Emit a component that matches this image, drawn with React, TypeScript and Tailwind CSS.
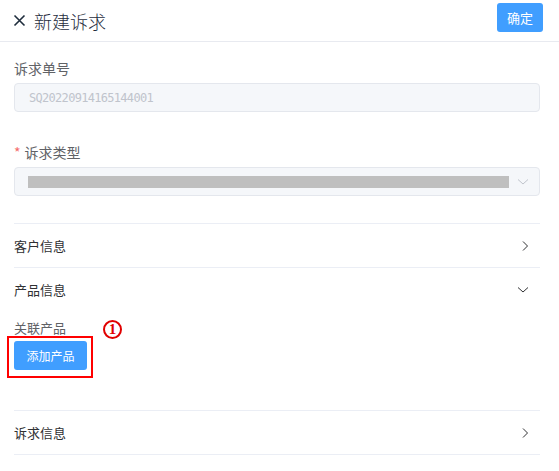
import React from "react";

const ChevronRight = () => (
  <svg width="8" height="12" viewBox="0 0 8 12" fill="none">
    <path d="M2 1.5L6.5 6L2 10.5" stroke="#303133" strokeWidth="1" />
  </svg>
);

const ChevronDown = ({color = "#303133"}: {color?: string}) => (
  <svg width="12" height="8" viewBox="0 0 12 8" fill="none">
    <path d="M1 1.5L6 6L11 1.5" stroke={color} strokeWidth="1" />
  </svg>
);

const SectionRow = ({title, open = false}: {title: string; open?: boolean}) => (
  <div className="flex items-center justify-between h-[43px] text-[13px] text-[#303133]">
    <span>{title}</span>
    <span className="pr-[11px]">{open ? <ChevronDown /> : <ChevronRight />}</span>
  </div>
);

export default function App() {
  return (
    <div className="w-[559px] h-[471px] bg-white overflow-hidden" style={{fontFamily: '"Noto Sans CJK SC", "Noto Sans", sans-serif'}}>
      {/* header */}
      <div className="flex items-center justify-between h-[42px] border-b border-[#e8eaf0] pl-[13px] pr-[16px]">
        <div className="flex items-center gap-[8px] text-[#1f2d3d]">
          <svg width="13" height="13" viewBox="0 0 13 13" fill="none">
            <path d="M1.5 1.5L11.5 11.5M11.5 1.5L1.5 11.5" stroke="#1f2d3d" strokeWidth="1.6" />
          </svg>
          <span className="text-[18px] leading-none font-light">新建诉求</span>
        </div>
        <button className="w-[46px] h-[29px] rounded-[3px] bg-[#409eff] text-white text-[13px] -mt-[6px]">确定</button>
      </div>

      <div className="pl-[14px] pr-[19px]">
        {/* 诉求单号 */}
        <div className="pt-[15px]">
          <div className="text-[14px] leading-[22px] text-[#606266]">诉求单号</div>
          <div className="mt-[4px] h-[29px] rounded-[4px] border border-[#e4e7ed] bg-[#f5f7fa] flex items-center pl-[14px]">
            <span className="text-[12px] text-[#c0c4cc]" style={{fontFamily: '"DejaVu Sans Mono", monospace', letterSpacing: "-0.7px"}}>SQ20220914165144001</span>
          </div>
        </div>

        {/* 诉求类型 */}
        <div className="pt-[29px]">
          <div className="text-[14px] leading-[22px] text-[#606266] flex items-center">
            <span className="text-[#f56c6c] mr-[4px]">*</span>
            诉求类型
          </div>
          <div className="mt-[4px] h-[29px] rounded-[4px] border border-[#e4e7ed] bg-[#f5f7fa] flex items-center pl-[13px] pr-[10px] gap-[8px]">
            <div className="flex-1 h-[12px] bg-[#bfbfbf]" />
            <ChevronDown color="#c0c4cc" />
          </div>
        </div>

        <div className="mt-[27px] border-t border-[#ebeef5]" />
        <SectionRow title="客户信息" />
        <div className="border-t border-[#ebeef5]" />
        <SectionRow title="产品信息" open />

        {/* 关联产品 */}
        <div className="pt-[6px] h-[99px]">
          <div className="flex items-start">
            <span className="text-[13px] leading-[22px] text-[#606266]">关联产品</span>
            <span
              className="ml-[37px] mt-[3px] w-[19px] h-[19px] rounded-full border-2 border-[#e00000] flex items-center justify-center text-[15px] leading-none font-bold text-[#e00000]"
              style={{fontFamily: '"Liberation Serif", serif'}}
            >
              1
            </span>
          </div>
          <div className="relative inline-block mt-[2px]">
            <button className="w-[73px] h-[29px] rounded-[3px] bg-[#409eff] text-white text-[12px]">添加产品</button>
            <div className="absolute left-[-7px] top-[-5px] right-[-6px] bottom-[-8px] border-2 border-[#ff0000]" />
          </div>
        </div>

        <div className="border-t border-[#ebeef5]" />
        <SectionRow title="诉求信息" />
        <div className="border-t border-[#ebeef5]" />
      </div>
    </div>
  );
}
